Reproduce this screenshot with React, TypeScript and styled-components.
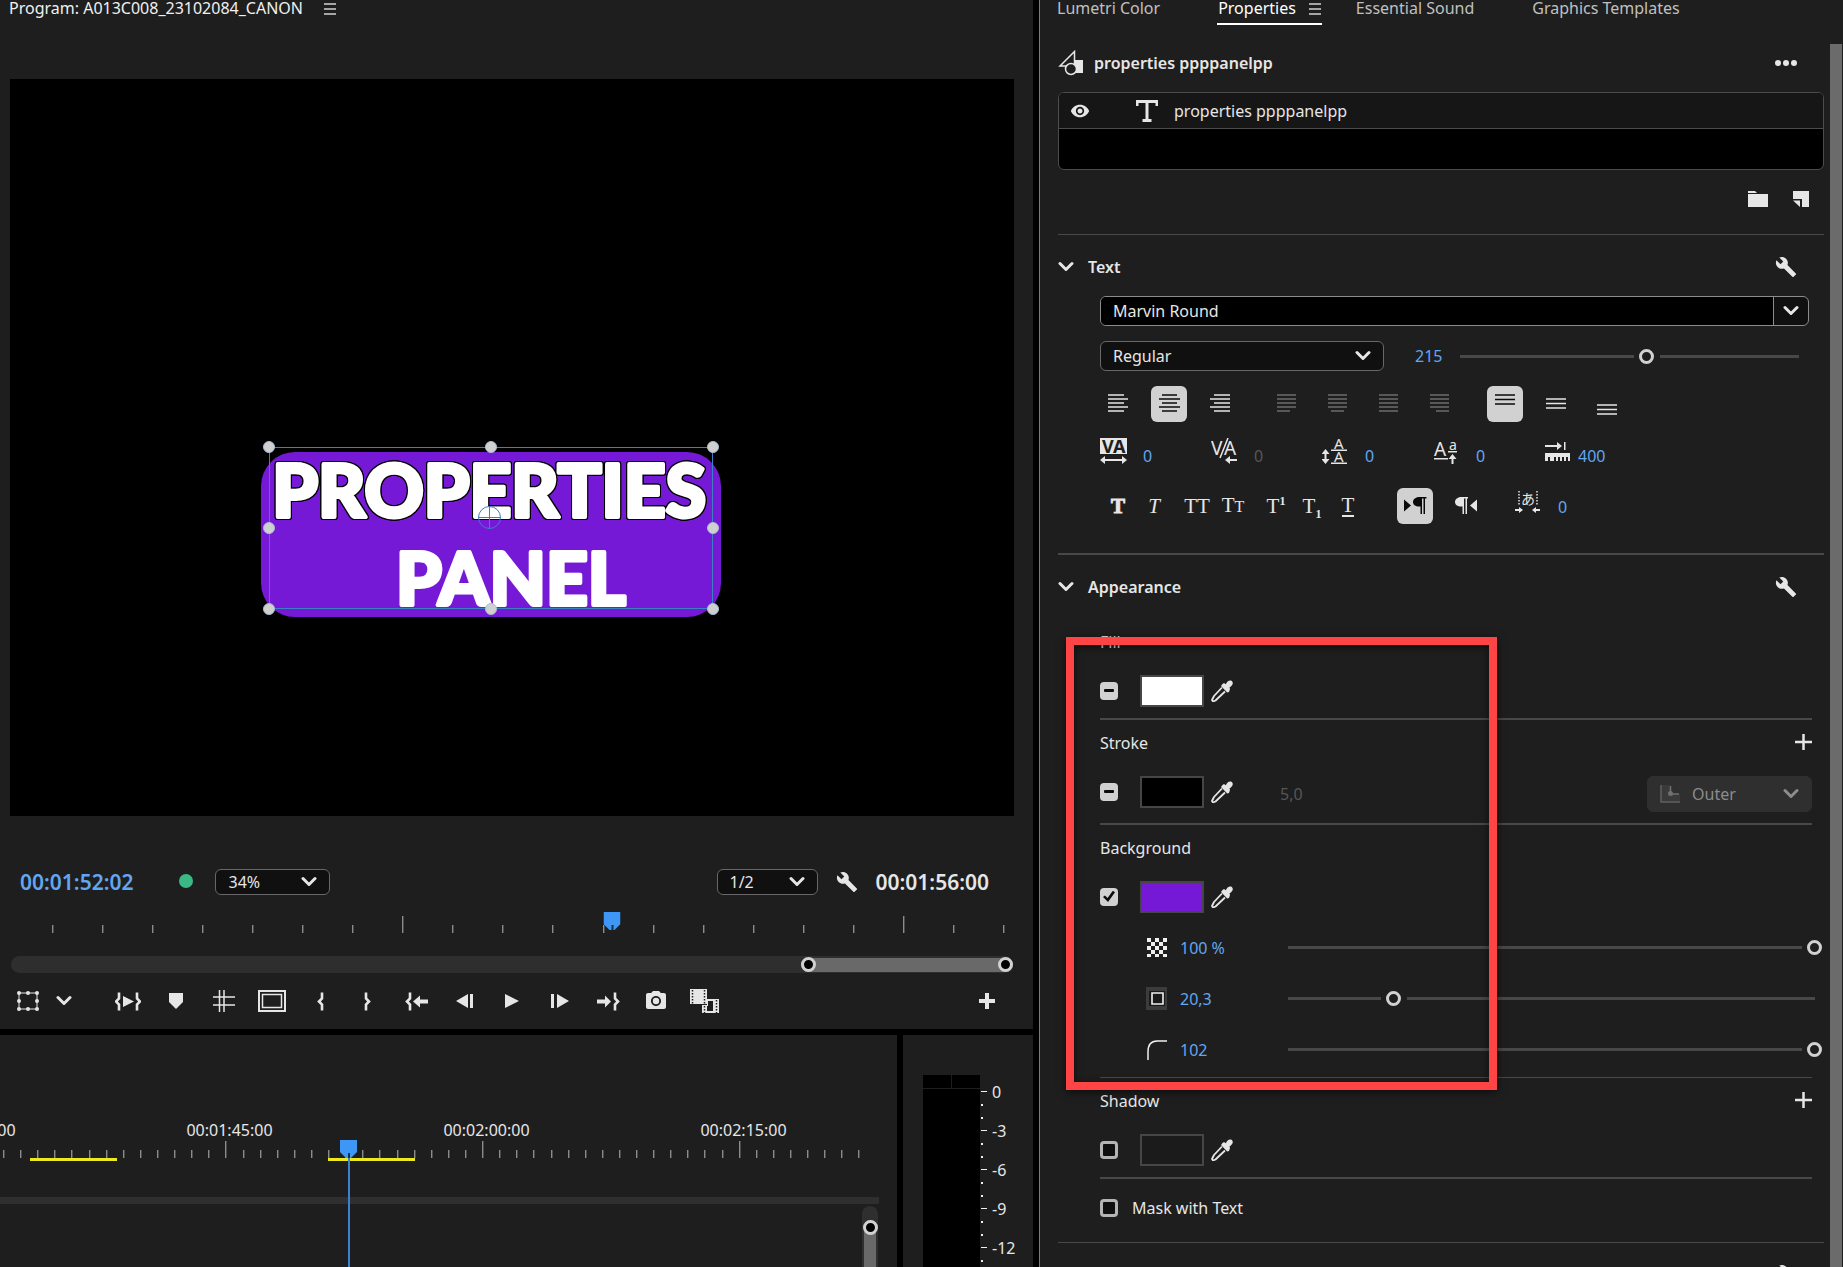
import React from "react";
import styled, { createGlobalStyle, css } from "styled-components";
import { MdBuild, MdPhotoCamera, MdVisibility } from "react-icons/md";

const color = {
  panel: "#1e1e1e",
  gap: "#000000",
  text: "#e6e6e6",
  dim: "#c0c0c0",
  blue: "#62a6f2",
  playhead: "#3f97f5",
  rule: "#484848",
  light: "#d1d1d1",
  purple: "#7619d6",
};

const GlobalStyle = createGlobalStyle`
  * { box-sizing: border-box; }
  body {
    margin: 0;
    background: ${color.gap};
    color: ${color.text};
    font: 16px/24px "Noto Sans", "Noto Sans CJK JP", sans-serif;
    overflow: hidden;
  }
  button, input, select { font: inherit; color: inherit; margin: 0; }
  svg { display: block; flex: none; }
`;

/* ---------- shared parts ---------- */

const Workspace = styled.div`
  display: grid;
  grid-template-columns: minmax(0, 1033fr) minmax(0, 804fr);
  column-gap: 6px;
  height: 100vh;
`;

const LeftColumn = styled.div`
  display: grid;
  grid-template-rows: minmax(0, 1fr) 232px;
  row-gap: 6px;
  min-height: 0;
`;

const Panel = styled.section`
  background: ${color.panel};
  min-width: 0;
  min-height: 0;
  overflow: hidden;
`;

const IconButton = styled.button<{ $w?: number; $active?: boolean; $off?: boolean }>`
  display: flex;
  align-items: center;
  justify-content: center;
  flex: none;
  width: ${(p) => p.$w ?? 36}px;
  height: 36px;
  padding: 0;
  border: 0;
  border-radius: 6px;
  background: ${(p) => (p.$active ? color.light : "transparent")};
  color: ${(p) => (p.$active ? "#0a0a0a" : p.$off ? "#6c6c6c" : color.text)};
`;

const SelectBox = styled.div<{ $w: number; $h: number; $flat?: boolean }>`
  display: grid;
  grid-template-columns: 1fr auto;
  align-items: center;
  flex: none;
  width: ${(p) => p.$w}px;
  height: ${(p) => p.$h}px;
  border: 1px solid ${(p) => (p.$flat ? "#2f2f2f" : "#686868")};
  border-radius: 6px;
  background: ${(p) => (p.$flat ? "#2f2f2f" : "#101010")};
  color: ${(p) => (p.$flat ? "#8c8c8c" : color.text)};
  select {
    grid-area: 1 / 1 / 2 / 3;
    width: 100%;
    height: 100%;
    padding: 0 12px;
    padding-left: ${(p) => (p.$flat ? 44 : 12)}px;
    border: 0;
    background: transparent;
    appearance: none;
    opacity: 1;
  }
  svg {
    grid-area: 1 / 2;
    margin-right: 12px;
    pointer-events: none;
  }
  svg + svg {
    grid-area: 1 / 1;
    margin-left: 12px;
  }
`;

const Chevron = () => (
  <svg width="16" height="12" viewBox="0 0 16 12" fill="none" stroke="currentColor" strokeWidth="3" strokeLinecap="round" strokeLinejoin="round">
    <path d="M2 2.500l6 6 6-6" />
  </svg>
);

const MenuIcon = () => (
  <svg width="12" height="12" viewBox="0 0 12 12" fill="#a5a5a5">
    <path d="M0 0h12v2H0zM0 5h12v2H0zM0 10h12v2H0z" />
  </svg>
);

/* ---------- program monitor ---------- */

const Program = styled(Panel)`
  display: flex;
  flex-direction: column;
`;

const TitleBar = styled.header`
  display: flex;
  gap: 21px;
  height: 79px;
  padding: 0 9px;
  h1 {
    margin: 0;
    font-size: 16px;
    font-weight: 400;
    line-height: 16px;
    color: #f0f0f0;
  }
  svg { margin-top: 3px; }
`;

const Canvas = styled.div`
  position: relative;
  flex: 1;
  min-height: 0;
  margin: 0 19px 0 10px;
  background: #000;
`;

const TitleGraphic = styled.svg`
  position: absolute;
  left: 25%;
  top: 50.6%;
  overflow: visible;
  text {
    font: 900 73px Lato, sans-serif;
    text-anchor: middle;
    fill: #fff;
    stroke: #fff;
    stroke-width: 4px;
    stroke-linejoin: round;
  }
`;

const Outlined = styled.text`
  filter: drop-shadow(1px 0 0 #000) drop-shadow(-1px 0 0 #000) drop-shadow(0 1px 0 #000) drop-shadow(0 -1px 0 #000);
`;

const handles = [
  [8, -5], [230, -5], [452, -5], [8, 76], [452, 76], [8, 157], [230, 157], [452, 157],
];

const InfoRow = styled.div`
  display: flex;
  align-items: center;
  height: 86px;
  padding: 46px 44px 0 20px;
`;

const Timecode = styled.span<{ $blue?: boolean }>`
  font-size: 21px;
  font-weight: 600;
  color: ${(p) => (p.$blue ? color.blue : color.text)};
`;

const Led = styled.span`
  width: 14px;
  height: 14px;
  margin: 0 22px 2px 46px;
  border-radius: 50%;
  background: #3bb985;
`;

const Spacer = styled.span`
  flex: 1;
`;

const Ruler = styled.div`
  position: relative;
  height: 54px;
  padding-top: 14px;
`;

const Ticks = styled.div<{ $left: number; $right: number }>`
  display: flex;
  align-items: flex-end;
  justify-content: space-between;
  height: 17px;
  padding-left: ${(p) => p.$left}px;
  padding-right: ${(p) => p.$right}px;
`;

const Tick = styled.i<{ $big?: boolean }>`
  width: 1px;
  height: ${(p) => (p.$big ? 17 : 8)}px;
  background: #8c8c8c;
  box-shadow: 1px 0 0 rgba(140, 140, 140, 0.4);
`;

const PlayheadMark = styled.svg`
  position: absolute;
  left: 59.25%;
  top: 10px;
  transform: translateX(-50%);
`;

const Playhead = () => (
  <>
    <path d="M0 0h17v12l-6 6H6l-6-6z" fill={color.playhead} />
    <path d="M8 13h2v5H8z" fill="#10304f" />
  </>
);

const Zoombar = styled.div`
  display: flex;
  justify-content: flex-end;
  align-items: center;
  height: 17px;
  margin: 0 20px 0 11px;
  border-radius: 9px;
  background: #2e2e2e;
`;

const ZoomThumb = styled.div`
  display: flex;
  justify-content: space-between;
  align-items: center;
  width: 21.2%;
  height: 14px;
  border-radius: 7px;
  background: #696969;
`;

const Ring = styled.span`
  flex: none;
  width: 15px;
  height: 15px;
  border: 3px solid ${color.light};
  border-radius: 50%;
  background: #000;
`;

const Transport = styled.div`
  display: flex;
  align-items: center;
  height: 56px;
  padding: 0 28px 0 10px;
`;

const TransportGroup = styled.div`
  display: flex;
  flex: 1;
  margin-left: 22px;
`;

const Brace = ({ flip = false, x = 0 }: { flip?: boolean; x?: number }) => (
  <path
    d="M4 1.500v6l-3 3 3 3v6"
    transform={flip ? `translate(${x + 6} 0) scale(-1 1)` : `translate(${x} 0)`}
    fill="none"
    stroke="currentColor"
    strokeWidth="2.600"
  />
);

const transportIcons: [string, React.ReactNode][] = [
  ["Play in to out", <svg width="26" height="21" fill="currentColor"><Brace /><path d="M8 5l11 5.500L8 16z" /><Brace flip x={20} /></svg>],
  ["Add marker", <svg width="16" height="16" fill="currentColor"><path d="M1 0h14v9l-7 7-7-7z" /></svg>],
  ["Show guides", <svg width="22" height="22" stroke="currentColor" strokeWidth="1.500"><path d="M0 7h22M0 15h22M6.500 0v22M11 0v22" /></svg>],
  ["Safe margins", <svg width="28" height="22" fill="none" stroke="currentColor"><path strokeWidth="2" d="M1 1h26v20H1z" /><path strokeWidth="1.500" d="M4.500 4.500h19v13h-19z" /></svg>],
  ["Mark in", <svg width="8" height="21"><Brace x={2} /></svg>],
  ["Mark out", <svg width="9" height="21"><Brace flip /></svg>],
  ["Go to in", <svg width="23" height="21" fill="currentColor"><Brace x={1} /><path d="M8 10.500l7-6v4h8v4h-8v4z" /></svg>],
  ["Step back", <svg width="18" height="14" fill="currentColor"><path d="M13 0v14L1 7zM15 0h3v14h-3z" /></svg>],
  ["Play", <svg width="15" height="14" fill="currentColor"><path d="M0 0l14 7-14 7z" /></svg>],
  ["Step forward", <svg width="18" height="14" fill="currentColor"><path d="M6 0v14l12-7zM0 0h3v14H0z" /></svg>],
  ["Go to out", <svg width="23" height="21" fill="currentColor"><path d="M14 10.500l-6-6v4H0v4h8v4z" /><Brace flip x={16} /></svg>],
  ["Export frame", <MdPhotoCamera size={24} />],
  ["Comparison view", (
    <svg width="29" height="24" fill="currentColor">
      <path d="M0 0h17v15H0z" />
      <path d="M2.500 1v14M14.500 1v14" stroke={color.panel} strokeWidth="1.500" strokeDasharray="1.500 1.500" />
      <path d="M12 16h5v-6h12v14H12z" />
      <path d="M17 12h6v10h-6v-5h1v-5z" fill={color.panel} />
      <path d="M14.500 17v7M26.500 11v13" stroke={color.panel} strokeWidth="1.500" strokeDasharray="1.500 1.500" />
    </svg>
  )],
];

const ProgramMonitor = () => (
  <Program aria-label="Program">
    <TitleBar>
      <h1>Program: A013C008_23102084_CANON</h1>
      <MenuIcon />
    </TitleBar>
    <Canvas>
      <TitleGraphic width="460" height="165">
        <rect width="460" height="165" rx="34" fill={color.purple} />
        <Outlined x="228" y="65">PROPERTIES</Outlined>
        <text x="250" y="153">PANEL</text>
        <g fill="none" stroke="#3b7fc4" strokeWidth="1">
          <path d="M8.500-4.500h443v161H8.500z" />
          <circle cx="228.500" cy="65.500" r="11" />
          <path d="M228.500 54v23M217 65.500h23" />
        </g>
        {handles.map(([x, y]) => (
          <circle key={`${x},${y}`} cx={x} cy={y} r="5.500" fill="#d0d0d0" stroke="#a8bfd8" />
        ))}
      </TitleGraphic>
    </Canvas>
    <InfoRow>
      <Timecode $blue>00:01:52:02</Timecode>
      <Led />
      <SelectBox $w={115} $h={26}>
        <select aria-label="Zoom level"><option>34%</option></select>
        <Chevron />
      </SelectBox>
      <Spacer />
      <SelectBox $w={101} $h={26}>
        <select aria-label="Playback resolution"><option>1/2</option></select>
        <Chevron />
      </SelectBox>
      <IconButton $w={58} aria-label="Settings"><MdBuild size={22} /></IconButton>
      <Timecode>00:01:56:00</Timecode>
    </InfoRow>
    <Ruler>
      <Ticks $left={52} $right={29}>
        {Array.from({ length: 20 }, (_, i) => <Tick key={i} $big={i % 10 === 7} />)}
      </Ticks>
      <PlayheadMark width="17" height="19"><Playhead /></PlayheadMark>
    </Ruler>
    <Zoombar>
      <ZoomThumb><Ring /><Ring /></ZoomThumb>
    </Zoombar>
    <Transport>
      <IconButton aria-label="Transform">
        <svg width="22" height="20" fill="currentColor">
          <path d="M2 2h18v16H2z" fill="none" stroke="currentColor" />
          <path d="M2 0a2 2 0 110 4 2 2 0 010-4zM11 0a2 2 0 110 4 2 2 0 010-4zM20 0a2 2 0 110 4 2 2 0 010-4zM2 16a2 2 0 110 4 2 2 0 010-4zM11 16a2 2 0 110 4 2 2 0 010-4zM20 16a2 2 0 110 4 2 2 0 010-4zM2 8a2 2 0 110 4 2 2 0 010-4zM20 8a2 2 0 110 4 2 2 0 010-4z" />
        </svg>
      </IconButton>
      <IconButton aria-label="Transform options"><Chevron /></IconButton>
      <TransportGroup>
        {transportIcons.map(([name, icon]) => (
          <IconButton key={name} $w={48} aria-label={name}>{icon}</IconButton>
        ))}
      </TransportGroup>
      <IconButton aria-label="Button editor">
        <svg width="16" height="16" fill="currentColor"><path d="M6 0h4v6h6v4h-6v6H6v-6H0V6h6z" /></svg>
      </IconButton>
    </Transport>
  </Program>
);

/* ---------- timeline and meters ---------- */

const BottomRow = styled.div`
  display: grid;
  grid-template-columns: minmax(0, 1fr) 130px;
  column-gap: 6px;
`;

const TimelinePanel = styled(Panel)`
  position: relative;
  display: flex;
  flex-direction: column;
`;

const TimeLabels = styled.div`
  display: flex;
  margin: 83px 0 -1px -156px;
  span {
    flex: 0 0 257px;
    text-align: center;
  }
`;

const RenderBars = styled.div`
  display: flex;
  gap: 211px;
  height: 3px;
  padding-left: 30px;
  i {
    width: 87px;
    background: #eee81f;
  }
`;

const TrackDivider = styled.div`
  height: 7px;
  margin: 36px 18px 2px 0;
  background: #2f2f2f;
`;

const VScroll = styled.div`
  flex: 1;
  align-self: flex-end;
  width: 16px;
  margin-right: 19px;
  padding-top: 14px;
  border-radius: 8px 8px 0 0;
  background: #2f2f2f;
`;

const VThumb = styled.div`
  height: 100%;
  margin: 0 2px;
  border-radius: 6px 6px 0 0;
  background: #696969;
  ${Ring} {
    display: block;
    margin-left: -1px;
  }
`;

const TimelinePlayhead = styled.svg`
  position: absolute;
  left: 340px;
  top: 105px;
`;

const Meter = styled(Panel)`
  display: flex;
  padding: 38px 0 0 20px;
`;

const Bars = styled.div`
  display: grid;
  grid-template-columns: 1fr 1fr;
  grid-template-rows: 13px 1fr;
  gap: 1px;
  width: 57px;
  margin: 2px 1px 0 0;
  i { background: #000; }
  i:last-child { grid-column: 1 / 3; }
`;

const Scale = styled.ul`
  margin: 0;
  padding: 0;
  list-style: none;
  li {
    display: flex;
    gap: 5px;
    height: 39px;
    line-height: 39px;
  }
  svg { overflow: visible; }
`;

const Bottom = () => (
  <BottomRow>
    <TimelinePanel aria-label="Timeline">
      <TimeLabels>
        {["00:01:30:00", "00:01:45:00", "00:02:00:00", "00:02:15:00"].map((t) => <span key={t}>{t}</span>)}
      </TimeLabels>
      <Ticks $left={3} $right={37}>
        {Array.from({ length: 51 }, (_, i) => <Tick key={i} $big={i % 15 === 13} />)}
      </Ticks>
      <RenderBars><i /><i /></RenderBars>
      <TrackDivider />
      <VScroll><VThumb><Ring /></VThumb></VScroll>
      <TimelinePlayhead width="17" height="127">
        <Playhead />
        <path d="M8 18h2v109H8z" fill="#3a82cf" />
      </TimelinePlayhead>
    </TimelinePanel>
    <Meter aria-label="Audio meters">
      <Bars><i /><i /><i /></Bars>
      <Scale>
        {["0", "-3", "-6", "-9", "-12"].map((db) => (
          <li key={db}>
            <svg width="6" height="39" fill="#f0f0f0"><path d="M0 18h6v1H0zM0 31h2v2H0zM0 44h2v2H0z" /></svg>
            <span>{db}</span>
          </li>
        ))}
      </Scale>
    </Meter>
  </BottomRow>
);

/* ---------- properties panel ---------- */

const Properties = styled(Panel)`
  display: flex;
  flex-direction: column;
  border-left: 1px solid #4d83c4;
`;

const Tabs = styled.nav`
  display: flex;
  height: 44px;
  padding-left: 16px;
  a {
    display: flex;
    gap: 13px;
    height: 25px;
    padding: 0 1px;
    line-height: 16px;
    color: ${color.dim};
    text-decoration: none;
    white-space: nowrap;
  }
  a[aria-current] {
    margin: 0 33px 0 56px;
    border-bottom: 2px solid #fff;
    color: #fff;
  }
  a:last-child { margin-left: 56px; }
  svg { margin-top: 3px; }
`;

const Scroller = styled.div`
  display: flex;
  flex: 1;
  min-height: 0;
  padding: 0 1px 0 18px;
`;

const Content = styled.div`
  flex: 1;
  min-width: 0;
  margin-right: 6px;
`;

const ScrollThumb = styled.div`
  width: 12px;
  background: #6b6b6b;
`;

const ObjectRow = styled.div`
  display: flex;
  align-items: center;
  gap: 10px;
  height: 38px;
  padding-right: 20px;
  h2 {
    flex: 1;
    margin: 0;
    font-size: 16px;
    font-weight: 600;
  }
`;

const Layers = styled.div`
  height: 78px;
  margin-top: 10px;
  border: 1px solid #4c4c4c;
  border-radius: 6px;
  background: #000;
`;

const Layer = styled.div`
  display: flex;
  align-items: center;
  height: 36px;
  padding-left: 3px;
  border-bottom: 1px solid #4c4c4c;
  border-radius: 5px 5px 0 0;
  background: #161616;
  > svg { margin: 0 16px 0 38px; }
`;

const LayerActions = styled.div`
  display: flex;
  align-items: center;
  justify-content: flex-end;
  gap: 7px;
  height: 58px;
  margin-bottom: 6px;
  padding-right: 5px;
`;

const Section = styled.section<{ $line: number }>`
  border-top: ${(p) => p.$line}px solid ${color.rule};
`;

const SectionHead = styled.header`
  display: flex;
  align-items: center;
  height: 64px;
  padding-right: 20px;
  h3 {
    flex: 1;
    margin: 0 0 0 14px;
    font-size: 16px;
    font-weight: 600;
  }
`;

const TextBody = styled.div`
  display: flex;
  flex-direction: column;
  gap: 15px;
  margin: -3px 15px 29px 42px;
`;

const FontField = styled.div`
  display: flex;
  height: 30px;
  border: 1px solid #8c8c8c;
  border-radius: 6px;
  background: #101010;
  overflow: hidden;
  input {
    flex: 1;
    min-width: 0;
    padding: 0 12px;
    border: 0;
    border-right: 1px solid #8c8c8c;
    background: #000;
  }
  button { height: 28px; }
`;

const Row = styled.div<{ $gap?: number }>`
  display: flex;
  align-items: center;
  gap: ${(p) => p.$gap ?? 0}px;
`;

const IconRows = styled.div`
  display: flex;
  flex-direction: column;
`;

const Metrics = styled.div`
  display: flex;
  align-items: center;
  height: 66px;
`;

const Metric = styled.div<{ $gap?: number }>`
  display: flex;
  align-items: center;
  gap: ${(p) => p.$gap ?? 16}px;
  flex: 0 0 111px;
  padding-top: 2px;
  > svg { margin-bottom: 10px; }
  svg text {
    font-family: "Noto Sans", "Noto Sans CJK JP", sans-serif;
    fill: currentColor;
    stroke: none;
  }
`;

const HotText = styled.button<{ $off?: boolean; $w?: number }>`
  flex: none;
  width: ${(p) => (p.$w ? `${p.$w}px` : "auto")};
  padding: 0;
  border: 0;
  background: none;
  text-align: left;
  line-height: 24px;
  white-space: nowrap;
  color: ${(p) => (p.$off ? "#565656" : color.blue)};
`;

const thumb = css`
  appearance: none;
  width: 15px;
  height: 15px;
  margin-top: -6px;
  border: 3px solid ${color.light};
  border-radius: 50%;
  background: transparent;
`;

const Range = styled.input`
  flex: 1;
  min-width: 0;
  height: 16px;
  appearance: none;
  background: none;
  &::-webkit-slider-runnable-track {
    height: 3px;
    background: linear-gradient(
      90deg,
      transparent 7px,
      #484848 7px,
      #484848 calc(var(--at) - 13px),
      transparent calc(var(--at) - 13px),
      transparent calc(var(--at) + 13px),
      #484848 calc(var(--at) + 13px),
      #484848 calc(100% - 7px),
      transparent calc(100% - 7px)
    );
  }
  &::-webkit-slider-thumb { ${thumb} }
`;

const Slider = ({ label, value }: { label: string; value: number }) => {
  const [v, setV] = React.useState(value);
  return (
    <Range
      type="range"
      aria-label={label}
      min={0}
      max={100}
      value={v}
      onChange={(e) => setV(Number(e.target.value))}
      style={{ "--at": `calc(8px + ${v / 100} * (100% - 15px))` } as React.CSSProperties}
    />
  );
};

const SizeRow = styled(Row)`
  margin-right: 3px;
  ${HotText} { margin: 0 11px 0 31px; }
`;

const Glyph = styled.span<{ $bold?: boolean; $italic?: boolean; $under?: boolean }>`
  font-family: "Liberation Serif", serif;
  font-size: 21px;
  font-weight: ${(p) => (p.$bold ? 700 : 400)};
  font-style: ${(p) => (p.$italic ? "italic" : "normal")};
  line-height: 20px;
  border-bottom: ${(p) => (p.$under ? "2px solid currentColor" : "0")};
  -webkit-text-stroke: ${(p) => (p.$bold ? 1 : 0)}px currentColor;
  small { font-size: 16px; }
  sup, sub { font-size: 12px; font-weight: 700; line-height: 0; }
`;

const linesIcon = (spans: [number, number][]) => (
  <svg width="21" height="20" stroke="currentColor" strokeWidth="1.500">
    <path d={spans.map(([a, b], i) => `M${a} ${1 + i * 4}H${b}`).join("")} />
  </svg>
);

const barsIcon = (top: number) => (
  <svg width="20" height="22" stroke="currentColor" strokeWidth="1.500">
    <path d={[0, 1, 2].map((i) => `M0 ${top + i * 4.5}H20`).join("")} />
  </svg>
);

const Pilcrow = ({ left = false }: { left?: boolean }) => (
  <svg width="23" height="18" fill="currentColor">
    {left ? (
      <path d="M7 0h6v1.500h-1V17h-1.500V1.500H9V17H7.500V9.500C3 10 0 8 0 5s3-5 7-5zM22 2.500v12l-7-6z" />
    ) : (
      <path d="M0 2.500v12l7-6zM16 0h6.500v1.500H21V17h-1.500V1.500H18V17h-1.500V9.500C12 10 9 8 9 5s3-5 7-5z" />
    )}
  </svg>
);

const AppearanceBody = styled.div`
  position: relative;
  margin: 0 12px 5px 42px;
`;

const Annotation = styled.div`
  position: absolute;
  left: -34px;
  top: 18px;
  width: 431px;
  height: 453px;
  border: 8px solid #fe4444;
  box-shadow: 0 2px 8px rgba(0, 0, 0, 0.6), inset 0 2px 8px rgba(0, 0, 0, 0.6);
  pointer-events: none;
`;

const Group = styled.div<{ $pad?: number; $line?: number }>`
  padding-bottom: ${(p) => p.$pad ?? 2}px;
  border-bottom: ${(p) => p.$line ?? 2}px solid ${color.rule};
`;

const GroupHead = styled.div`
  display: flex;
  align-items: center;
  justify-content: space-between;
  height: 46px;
  h4 {
    margin: 0;
    font-size: 16px;
    font-weight: 400;
  }
`;

const SwatchRow = styled.div`
  display: flex;
  align-items: center;
  height: 51px;
`;

const Check = styled.input<{ $mixed?: boolean }>`
  appearance: none;
  display: grid;
  place-items: center;
  flex: none;
  width: 18px;
  height: 18px;
  border: 3px solid #b4b4b4;
  border-radius: 4px;
  background: #101010;
  ${(p) =>
    (p.$mixed || p.defaultChecked) &&
    css`
      border: 0;
      background: ${color.light};
      &::after {
        content: "";
        width: ${p.$mixed ? 10 : 12}px;
        height: ${p.$mixed ? 3 : 12}px;
        border-radius: ${p.$mixed ? 1 : 0}px;
        background: #0c0c0c;
        clip-path: ${p.$mixed ? "none" : "polygon(0 55%, 16% 42%, 38% 62%, 82% 2%, 100% 14%, 42% 96%)"};
      }
    `}
`;

const Swatch = styled.button<{ $fill: string }>`
  width: 64px;
  height: 32px;
  margin: 0 0 0 22px;
  padding: 0;
  border: 2px solid #464646;
  background: ${(p) => p.$fill};
`;

const StrokeOptions = styled.div`
  display: flex;
  flex: 1;
  align-items: center;
  justify-content: space-between;
  padding: 4px 0 0 40px;
`;

const PropRow = styled.div`
  display: flex;
  align-items: center;
  height: 51px;
  margin-right: -10px;
  padding-left: 46px;
  > svg { margin-right: 13px; }
`;

const MaskRow = styled.label`
  display: flex;
  align-items: center;
  gap: 14px;
  height: 58px;
`;

const Dropper = () => (
  <IconButton aria-label="Pick color">
    <svg width="22" height="22" viewBox="0 0 22 22" fill="currentColor">
      <path d="M11.500 4l1.500-1 1.800 1.200C16 1.500 18.500-.5 20.800 1c2 1.800.8 4.500-2.300 6.500L19 9l-1 3-1.800.5L10 6z" />
      <path d="M11 7.500L3 16l-2 4 1 1.500L4.500 20.500 14 11.500" fill="none" stroke="currentColor" strokeWidth="1.800" strokeLinejoin="round" />
    </svg>
  </IconButton>
);

const Plus = () => (
  <IconButton $w={17} aria-label="Add">
    <svg width="17" height="18" stroke="currentColor" strokeWidth="2.500"><path d="M8.500 0v16M0 8H17" /></svg>
  </IconButton>
);

const Wrench = () => (
  <IconButton aria-label="Options"><MdBuild size={22} /></IconButton>
);

const alignGroups: { off?: boolean; items: [string, React.ReactNode, boolean?][] }[] = [
  {
    items: [
      ["Align left", linesIcon([[0, 16], [0, 20], [0, 16], [0, 20], [0, 16]])],
      ["Align center", linesIcon([[3, 18], [0, 21], [3, 18], [0, 21], [3, 18]]), true],
      ["Align right", linesIcon([[4, 20], [0, 20], [4, 20], [0, 20], [4, 20]])],
    ],
  },
  {
    off: true,
    items: [
      ["Justify last left", linesIcon([[1, 20], [1, 20], [1, 20], [1, 20], [1, 14]])],
      ["Justify last center", linesIcon([[1, 20], [1, 20], [1, 20], [1, 20], [4, 17]])],
      ["Justify all", linesIcon([[1, 20], [1, 20], [1, 20], [1, 20], [1, 20]])],
      ["Justify last right", linesIcon([[1, 20], [1, 20], [1, 20], [1, 20], [7, 20]])],
    ],
  },
  {
    items: [
      ["Align top", barsIcon(2), true],
      ["Align middle", barsIcon(6)],
      ["Align bottom", barsIcon(12)],
    ],
  },
];

const TextSection = () => (
  <Section $line={1}>
    <SectionHead>
      <Chevron />
      <h3>Text</h3>
      <Wrench />
    </SectionHead>
    <TextBody>
      <FontField>
        <input aria-label="Font family" defaultValue="Marvin Round" />
        <IconButton $w={34} aria-label="Show fonts"><Chevron /></IconButton>
      </FontField>
      <SizeRow>
        <SelectBox $w={284} $h={30}>
          <select aria-label="Font style"><option>Regular</option></select>
          <Chevron />
        </SelectBox>
        <HotText>215</HotText>
        <Slider label="Font size" value={55} />
      </SizeRow>
      <IconRows>
        <Row $gap={30}>
          {alignGroups.map((g, i) => (
            <Row key={i} $gap={15}>
              {g.items.map(([name, icon, on]) => (
                <IconButton key={name} aria-label={name} $active={on} $off={g.off} disabled={g.off}>{icon}</IconButton>
              ))}
            </Row>
          ))}
        </Row>
        <Metrics>
          <Metric>
            <svg width="27" height="26" fill="currentColor">
              <path d="M0 0h27v16H0z" />
              <text x="2" y="15" fontSize="18" fontWeight="700" style={{ fill: color.panel }}>VA</text>
              <path d="M0 22l5-4v3h17v-3l5 4-5 4v-3H5v3z" />
            </svg>
            <HotText>0</HotText>
          </Metric>
          <Metric>
            <svg width="27" height="26" fill="currentColor">
              <text x="0" y="17" fontSize="19">V</text>
              <text x="13" y="17" fontSize="19">A</text>
              <path d="M17 0L9 20" stroke="currentColor" strokeWidth="1.500" />
              <path d="M14 22l5-4v3h7v2h-7v3z" />
            </svg>
            <HotText $off disabled>0</HotText>
          </Metric>
          <Metric>
            <svg width="27" height="26" fill="currentColor">
              <path d="M3.500 11l4 5H4.500v5h3l-4 5-4-5h3v-5h-3z" />
              <text x="12" y="11" fontSize="15">A</text>
              <text x="12" y="24" fontSize="15">A</text>
              <path d="M9 11.500h16v1.500H9zM9 24.500h16V26H9z" />
            </svg>
            <HotText>0</HotText>
          </Metric>
          <Metric>
            <svg width="27" height="26" fill="currentColor">
              <text x="1" y="18" fontSize="19">A</text>
              <text x="16" y="12" fontSize="14">a</text>
              <path d="M1 20h14v1.500H1zM15 13h9v1.500h-9zM19.500 16l4 5h-3v5h-2v-5h-3z" />
            </svg>
            <HotText>0</HotText>
          </Metric>
          <Metric $gap={7}>
            <svg width="27" height="26" fill="currentColor">
              <path d="M1 7h12V4l5 4-5 4V9H1zM20 4h1.500v8H20zM1 15h25v8h-2v-4h-2v4h-2v-4h-2v4h-2v-4h-2v4h-2v-4h-2v4h-2v-4H8v4H6v-4H4v4H1z" />
            </svg>
            <HotText>400</HotText>
          </Metric>
        </Metrics>
        <Row $gap={31}>
          <Row $gap={7}>
            <Row>
              <IconButton aria-label="Faux bold"><Glyph $bold>T</Glyph></IconButton>
              <IconButton aria-label="Faux italic"><Glyph $italic>T</Glyph></IconButton>
            </Row>
            <Row>
              <IconButton aria-label="All caps"><Glyph>TT</Glyph></IconButton>
              <IconButton aria-label="Small caps"><Glyph>T<small>T</small></Glyph></IconButton>
            </Row>
            <Row>
              <IconButton aria-label="Superscript"><Glyph>T<sup>1</sup></Glyph></IconButton>
              <IconButton aria-label="Subscript"><Glyph>T<sub>1</sub></Glyph></IconButton>
              <IconButton aria-label="Underline"><Glyph $under>T</Glyph></IconButton>
            </Row>
          </Row>
          <Row $gap={15}>
            <IconButton $active aria-label="Left-to-right"><Pilcrow /></IconButton>
            <IconButton aria-label="Right-to-left"><Pilcrow left /></IconButton>
          </Row>
          <Metric>
            <svg width="27" height="22" fill="currentColor">
              <text x="6" y="13" fontSize="14">あ</text>
              <path d="M4 0v15M22 0v15" stroke="currentColor" strokeWidth="1.500" strokeDasharray="1.500 1.500" />
              <path d="M0 18h4v-2l4 3-4 3v-2H0zM25 18h-4v-2l-4 3 4 3v-2h4z" />
            </svg>
            <HotText>0</HotText>
          </Metric>
        </Row>
      </IconRows>
    </TextBody>
  </Section>
);

const AppearanceSection = () => (
  <Section $line={2}>
    <SectionHead>
      <Chevron />
      <h3>Appearance</h3>
      <Wrench />
    </SectionHead>
    <AppearanceBody>
      <Group>
        <GroupHead><h4>Fill</h4></GroupHead>
        <SwatchRow>
          <Check type="checkbox" $mixed aria-label="Fill" />
          <Swatch $fill="#ffffff" aria-label="Fill color" />
          <Dropper />
        </SwatchRow>
      </Group>
      <Group $pad={6}>
        <GroupHead><h4>Stroke</h4><Plus /></GroupHead>
        <SwatchRow>
          <Check type="checkbox" $mixed aria-label="Stroke" />
          <Swatch $fill="#000000" aria-label="Stroke color" />
          <Dropper />
          <StrokeOptions>
            <HotText $off disabled>5,0</HotText>
            <SelectBox $w={165} $h={36} $flat>
              <select aria-label="Stroke position"><option>Outer</option></select>
              <Chevron />
              <svg width="20" height="18" viewBox="0 0 20 18">
                <path d="M1 0h9v9h10v8H1z" fill="#3a3a3a" />
                <path d="M1 0v17h19" fill="none" stroke="#606060" strokeWidth="1.500" />
                <path d="M10.500 1v8H19" fill="none" stroke="#707070" strokeWidth="1.500" />
                <circle cx="10.500" cy="8.500" r="2.500" fill="#707070" />
              </svg>
            </SelectBox>
          </StrokeOptions>
        </SwatchRow>
      </Group>
      <Group $line={1}>
        <GroupHead><h4>Background</h4></GroupHead>
        <SwatchRow>
          <Check type="checkbox" defaultChecked aria-label="Background" />
          <Swatch $fill={color.purple} aria-label="Background color" />
          <Dropper />
        </SwatchRow>
        <PropRow>
          <svg width="21" height="19" fill="#f0f0f0">
            {Array.from({ length: 25 }, (_, i) =>
              i % 2 === 0 ? <rect key={i} x={1 + (i % 5) * 4} y={Math.floor(i / 5) * 4} width="4" height="4" /> : null
            )}
          </svg>
          <HotText $w={101}>100 %</HotText>
          <Slider label="Background opacity" value={100} />
        </PropRow>
        <PropRow>
          <svg width="21" height="23">
            <path fill="#3c3c3c" d="M0 0h21v23H0z" />
            <path fill="#1a1a1a" d="M3 4h16v15H3z" />
            <path fill="none" stroke="#f0f0f0" strokeWidth="1.600" d="M6 6h11v11H6z" />
          </svg>
          <HotText $w={101}>20,3</HotText>
          <Slider label="Background size" value={20} />
        </PropRow>
        <PropRow>
          <svg width="21" height="20" fill="none" stroke="#f0f0f0" strokeWidth="1.500">
            <path d="M2 20v-8C2 5 5 1 11 1h10" />
          </svg>
          <HotText $w={101}>102</HotText>
          <Slider label="Corner radius" value={100} />
        </PropRow>
      </Group>
      <Group>
        <GroupHead><h4>Shadow</h4><Plus /></GroupHead>
        <SwatchRow>
          <Check type="checkbox" aria-label="Shadow" />
          <Swatch $fill="#1b1b1b" aria-label="Shadow color" />
          <Dropper />
        </SwatchRow>
      </Group>
      <MaskRow>
        <Check type="checkbox" />
        Mask with Text
      </MaskRow>
      <Annotation />
    </AppearanceBody>
  </Section>
);

const PropertiesPanel = () => (
  <Properties aria-label="Properties">
    <Tabs>
      <a href="#lumetri">Lumetri Color</a>
      <a href="#properties" aria-current="page">Properties<MenuIcon /></a>
      <a href="#sound">Essential Sound</a>
      <a href="#templates">Graphics Templates</a>
    </Tabs>
    <Scroller>
      <Content>
        <ObjectRow>
          <svg width="26" height="26" fill={color.text}>
            <path d="M13 10h12v13H13z" />
            <path d="M16.500 1.500V16H2z" fill={color.panel} stroke={color.text} strokeWidth="1.500" />
            <circle cx="13" cy="19" r="5.500" fill={color.panel} stroke={color.text} strokeWidth="1.500" />
          </svg>
          <h2>properties ppppanelpp</h2>
          <IconButton aria-label="More">
            <svg width="22" height="6" fill="currentColor"><circle cx="3" cy="3" r="3" /><circle cx="11" cy="3" r="3" /><circle cx="19" cy="3" r="3" /></svg>
          </IconButton>
        </ObjectRow>
        <Layers>
          <Layer>
            <IconButton aria-label="Toggle visibility"><MdVisibility size={20} /></IconButton>
            <svg width="22" height="22" fill="currentColor"><path d="M0 0h22v6h-2.500V3H12.500v16H15.500V22H6.500v-3h3V3H2.500v3H0z" /></svg>
            <span>properties ppppanelpp</span>
          </Layer>
        </Layers>
        <LayerActions>
          <IconButton aria-label="New group">
            <svg width="20" height="16" fill="currentColor"><path d="M0 0h7l2 2H0zM0 3h20v13H0z" /></svg>
          </IconButton>
          <IconButton aria-label="New layer">
            <svg width="16" height="16" fill="currentColor"><path d="M0 0h16v16H9V8H0z" /><path d="M0 9.500h7V16z" /></svg>
          </IconButton>
        </LayerActions>
        <TextSection />
        <AppearanceSection />
        <Section $line={1}>
          <SectionHead><Chevron /><Spacer /><Wrench /></SectionHead>
        </Section>
      </Content>
      <ScrollThumb />
    </Scroller>
  </Properties>
);

export default function App() {
  return (
    <>
      <GlobalStyle />
      <Workspace>
        <LeftColumn>
          <ProgramMonitor />
          <Bottom />
        </LeftColumn>
        <PropertiesPanel />
      </Workspace>
    </>
  );
}
